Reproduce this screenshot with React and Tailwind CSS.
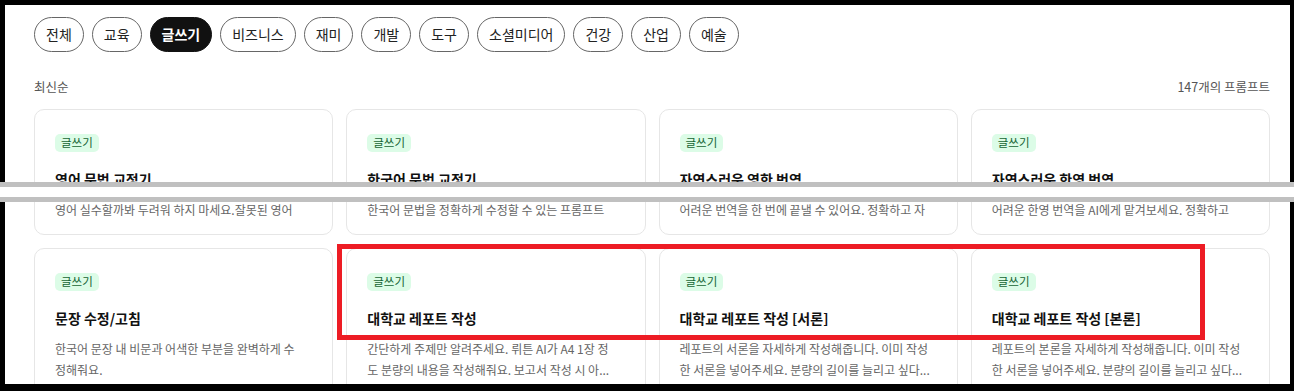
import React from "react";

const categories = ["전체", "교육", "글쓰기", "비즈니스", "재미", "개발", "도구", "소셜미디어", "건강", "산업", "예술"];

const topRow = [
  { title: "영어 문법 교정기", desc: "영어 실수할까봐 두려워 하지 마세요.잘못된 영어" },
  { title: "한국어 문법 교정기", desc: "한국어 문법을 정확하게 수정할 수 있는 프롬프트" },
  { title: "자연스러운 영한 번역", desc: "어려운 번역을 한 번에 끝낼 수 있어요. 정확하고 자" },
  { title: "자연스러운 한영 번역", desc: "어려운 한영 번역을 AI에게 맡겨보세요. 정확하고" },
];

const bottomRow = [
  { title: "문장 수정/고침", lines: ["한국어 문장 내 비문과 어색한 부분을 완벽하게 수", "정해줘요."] },
  { title: "대학교 레포트 작성", lines: ["간단하게 주제만 알려주세요. 뤼튼 AI가 A4 1장 정", "도 분량의 내용을 작성해줘요. 보고서 작성 시 아..."] },
  { title: "대학교 레포트 작성 [서론]", lines: ["레포트의 서론을 자세하게 작성해줍니다. 이미 작성", "한 서론을 넣어주세요. 분량의 길이를 늘리고 싶다..."] },
  { title: "대학교 레포트 작성 [본론]", lines: ["레포트의 본론을 자세하게 작성해줍니다. 이미 작성", "한 서론을 넣어주세요. 분량의 길이를 늘리고 싶다..."] },
];

function Tag() {
  return (
    <span className="flex h-[18px] w-fit items-center rounded-[5px] bg-[#dcfce7] px-[6px] text-[11.5px] leading-none text-[#166534]">
      글쓰기
    </span>
  );
}

function Card({ title, lines, short }) {
  return (
    <div
      className={`overflow-hidden rounded-[10px] border border-[#e6e6e6] bg-white px-[20px] pt-[24px] ${
        short ? "h-[126px]" : "h-[160px]"
      }`}
    >
      <Tag />
      <h3 className="mt-[17px] text-[14px] font-bold leading-[20px] text-[#111]">{title}</h3>
      <div className="mt-[10px] text-[12px] leading-[21px] text-[#666]">
        {lines.map((l) => (
          <p key={l} className="whitespace-nowrap">{l}</p>
        ))}
      </div>
    </div>
  );
}

export default function App() {
  return (
    <div className="relative h-[391px] w-[1294px] bg-black pb-[7px] pl-[5px] pr-[4px] pt-[5px] font-['Noto_Sans_CJK_KR','Noto_Sans',sans-serif]">
      <div className="h-full overflow-hidden bg-white pl-[29px] pr-[20px] pt-[12px]">
        {/* category chips */}
        <div className="flex gap-[8px]">
          {categories.map((c) => (
            <button
              key={c}
              className={
                c === "글쓰기"
                  ? "h-[35px] rounded-full border border-[#111] bg-[#111] px-[11px] text-[14px] font-bold text-white"
                  : "h-[35px] rounded-full border border-[#666] bg-white px-[11px] text-[14px] text-[#222]"
              }
            >
              {c}
            </button>
          ))}
        </div>

        <div className="mt-[25px] flex items-center justify-between text-[12.5px] leading-[20px] text-[#555]">
          <span>최신순</span>
          <span>147개의 프롬프트</span>
        </div>

        <div className="mt-[12px] grid grid-cols-4 gap-[13px]">
          {topRow.map((card) => (
            <Card key={card.title} title={card.title} lines={[card.desc]} short />
          ))}
          {bottomRow.map((card) => (
            <Card key={card.title} title={card.title} lines={card.lines} />
          ))}
        </div>
      </div>

      {/* page cut marker */}
      <div className="absolute left-0 right-0 top-[182px] h-[20px] border-y-[5px] border-[#c0c0c0] bg-white" />

      {/* highlight box */}
      <div className="absolute left-[337px] top-[244px] h-[96px] w-[868px] border-[5px] border-[#ed1c24]" />
    </div>
  );
}
